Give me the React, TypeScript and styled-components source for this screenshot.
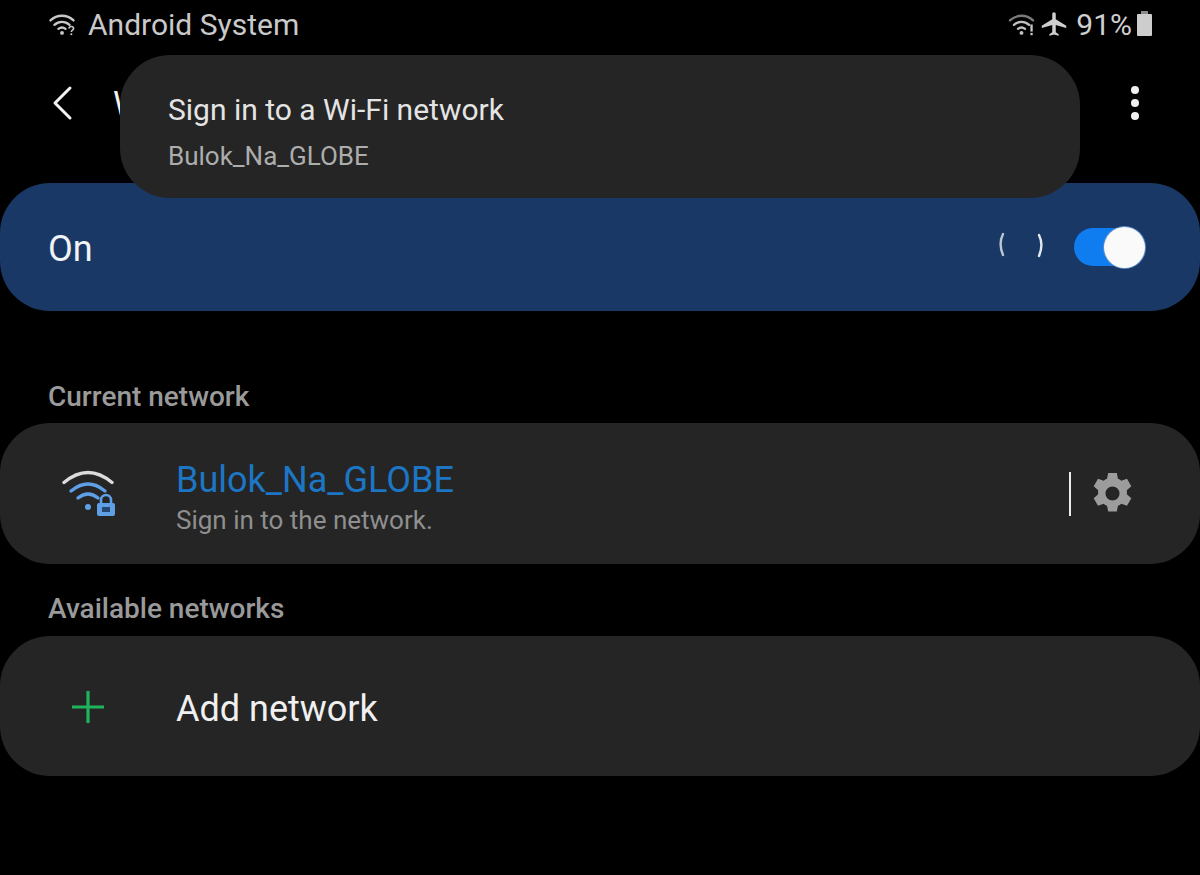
import styled, { createGlobalStyle } from 'styled-components';

const GlobalStyle = createGlobalStyle`
  html, body {
    margin: 0;
    padding: 0;
    background: #000;
  }
  body {
    font-family: Roboto, "Noto Sans", sans-serif;
  }
`;

const WifiArcs: React.FC<{ color: string; outer?: string }> = ({ color, outer }) => (
  <>
    <path d="M2 9.500C9.500 2.500 20.500 2.500 28 9.500" fill="none" stroke={outer ?? color} strokeWidth="2.600" strokeLinecap="round" />
    <path d="M6.500 14.500C11.500 10 18.500 10 23.500 14.500" fill="none" stroke={color} strokeWidth="2.600" strokeLinecap="round" />
    <path d="M11 19C13.500 17 16.500 17 19 19" fill="none" stroke={color} strokeWidth="2.600" strokeLinecap="round" />
    <circle cx="15" cy="23.500" r="2.200" fill={color} />
  </>
);

const App: React.FC = () => (
  <Screen>
    <GlobalStyle />
    <StatusBar>
      <StatusLeft>
        <svg width="28" height="24" viewBox="0 0 30 27">
          <WifiArcs color="#c8c8c8" />
          <path d="M23 18.500C23 15.500 28 15.500 28 18.500C28 20.500 25.500 20.500 25.500 22.500" fill="none" stroke="#c8c8c8" strokeWidth="1.800" />
          <rect x="24.500" y="24" width="2" height="2" fill="#c8c8c8" />
        </svg>
        <StatusLabel>Android System</StatusLabel>
      </StatusLeft>
      <StatusRight>
        <svg width="27" height="24" viewBox="0 0 30 27">
          <WifiArcs color="#c0c0c0" outer="#7a7a7a" />
          <rect x="25" y="14" width="2.600" height="8" fill="#c8c8c8" />
          <rect x="25" y="23.500" width="2.600" height="2.600" fill="#c8c8c8" />
        </svg>
        <PlaneIcon width="28" height="28" viewBox="0 0 24 24">
          <path
            fill="#cfcfcf"
            d="M22.500 15.500v-2l-9-5.500V3.500C13.500 2.670 12.830 2 12 2s-1.500.67-1.500 1.500V8l-9 5.500v2l9-2.700V19l-2.500 1.800V22l4-1 4 1v-1.200L13.500 19v-6.200z"
          />
        </PlaneIcon>
        <BatteryText>91%</BatteryText>
        <Battery />
      </StatusRight>
    </StatusBar>

    <TopBar>
      <svg width="24" height="36" viewBox="0 0 24 36">
        <path d="M20 3L5 18L20 33" fill="none" stroke="#f2f2f2" strokeWidth="3" strokeLinecap="round" strokeLinejoin="round" />
      </svg>
      <PageTitle>Wi-Fi</PageTitle>
      <MoreDots>
        <Dot />
        <Dot />
        <Dot />
      </MoreDots>
    </TopBar>

    <Toast>
      <ToastTitle>Sign in to a Wi-Fi network</ToastTitle>
      <ToastSubtitle>Bulok_Na_GLOBE</ToastSubtitle>
    </Toast>

    <MasterRow>
      <MasterLabel>On</MasterLabel>
      <MasterControls>
        <Spinner viewBox="0 0 46 28" width="46" height="28">
          <path d="M5 3C2 9 2 17 5 24" fill="none" stroke="#b9c6d4" strokeWidth="2.400" strokeLinecap="round" />
          <path d="M41 4C44 10 44 18 41 25" fill="none" stroke="#e4e9ee" strokeWidth="2.400" strokeLinecap="round" />
        </Spinner>
        <Toggle>
          <ToggleKnob />
        </Toggle>
      </MasterControls>
    </MasterRow>

    <SectionLabel $top={70}>Current network</SectionLabel>
    <Card $height={141} $top={10}>
      <IconCell>
        <svg width="56" height="48" viewBox="0 0 56 48">
          <path d="M4 12.500Q28 -7.500 52 12.500" fill="none" stroke="#dcdcdc" strokeWidth="3.400" strokeLinecap="round" />
          <path d="M11 21Q28 7 45 21" fill="none" stroke="#5f9fe6" strokeWidth="3.400" strokeLinecap="round" />
          <path d="M18 28Q28 20 38 28" fill="none" stroke="#5f9fe6" strokeWidth="3.400" strokeLinecap="round" />
          <circle cx="28" cy="37" r="3" fill="#5f9fe6" />
          <path d="M41 33V30A5 5 0 0 1 51 30V33" fill="none" stroke="#5f9fe6" strokeWidth="2.600" />
          <rect x="37" y="33" width="18" height="13" rx="2" fill="#5f9fe6" />
          <rect x="42" y="37" width="8" height="5" fill="#24486f" />
        </svg>
      </IconCell>
      <CardBody>
        <NetworkName>Bulok_Na_GLOBE</NetworkName>
        <NetworkStatus>Sign in to the network.</NetworkStatus>
      </CardBody>
      <Divider />
      <GearButton>
        <svg width="47" height="47" viewBox="0 0 24 24">
          <path
            fill="#9c9c9c"
            fillRule="evenodd"
            d="M9.800 1.500h4.400l.6 3c.6.2 1.200.6 1.700 1l2.900-1 2.200 3.800-2.300 2c.1.700.1 1.400 0 2.100l2.300 2-2.200 3.800-2.900-1c-.5.4-1.100.8-1.700 1l-.6 3H9.800l-.6-3c-.6-.2-1.200-.6-1.700-1l-2.900 1-2.200-3.800 2.300-2c-.1-.7-.1-1.400 0-2.100l-2.300-2 2.200-3.800 2.900 1c.5-.4 1.100-.8 1.700-1zM12 8.400a3.600 3.600 0 1 0 0 7.200 3.600 3.600 0 0 0 0-7.200z"
          />
        </svg>
      </GearButton>
    </Card>

    <SectionLabel $top={29}>Available networks</SectionLabel>
    <Card $height={140} $top={11}>
      <IconCell>
        <svg width="34" height="34" viewBox="0 0 34 34">
          <path d="M17 2V34M1 18H33" fill="none" stroke="#1fb45c" strokeWidth="3.200" />
        </svg>
      </IconCell>
      <CardBody>
        <AddLabel>Add network</AddLabel>
      </CardBody>
    </Card>
  </Screen>
);

const Screen = styled.div`
  position: relative;
  display: flex;
  flex-direction: column;
  width: 1200px;
  height: 875px;
  overflow: hidden;
  background: #000;
`;

const StatusBar = styled.header`
  display: flex;
  align-items: center;
  justify-content: space-between;
  height: 48px;
  padding: 0 48px;
`;

const StatusLeft = styled.div`
  display: flex;
  align-items: center;
  gap: 12px;
`;

const StatusLabel = styled.span`
  font-size: 30px;
  color: #c9c9c9;
`;

const StatusRight = styled.div`
  display: flex;
  align-items: center;
  gap: 5px;
`;

const PlaneIcon = styled.svg`
  margin-right: 3px;
`;

const BatteryText = styled.span`
  font-size: 30px;
  color: #cfcfcf;
`;

const Battery = styled.div`
  position: relative;
  width: 15px;
  height: 22px;
  margin-top: 2px;
  background: #cdcdcd;
  border-radius: 1px;

  &::before {
    content: '';
    position: absolute;
    top: -3px;
    left: 4px;
    width: 7px;
    height: 3px;
    background: #8a8a8a;
  }
`;

const TopBar = styled.div`
  display: flex;
  align-items: center;
  height: 110px;
  padding: 0 50px;
  margin-bottom: 25px;
`;

const PageTitle = styled.h1`
  flex: 1;
  margin: 0 0 0 39px;
  font-size: 34px;
  font-weight: 400;
  color: #f2f2f2;
`;

const MoreDots = styled.div`
  display: flex;
  flex-direction: column;
  gap: 5px;
  margin-right: 11px;
`;

const Dot = styled.span`
  width: 8px;
  height: 8px;
  border-radius: 50%;
  background: #f0f0f0;
`;

const Toast = styled.div`
  position: absolute;
  top: 55px;
  left: 120px;
  z-index: 2;
  display: flex;
  flex-direction: column;
  justify-content: center;
  gap: 16px;
  box-sizing: border-box;
  width: 960px;
  height: 143px;
  padding: 9px 48px 0;
  border-radius: 50px;
  background: #252525;
`;

const ToastTitle = styled.div`
  font-size: 30px;
  line-height: 33px;
  color: #e4e4e4;
`;

const ToastSubtitle = styled.div`
  font-size: 26px;
  line-height: 28px;
  color: #adadad;
`;

const MasterRow = styled.section`
  display: flex;
  flex: none;
  align-items: center;
  justify-content: space-between;
  height: 128px;
  padding: 0 55px 0 48px;
  border-radius: 50px;
  background: #193865;
`;

const MasterLabel = styled.span`
  margin-top: 3px;
  font-size: 36px;
  color: #f0f2f5;
`;

const MasterControls = styled.div`
  display: flex;
  align-items: center;
  gap: 30px;
`;

const Spinner = styled.svg`
  margin-bottom: 4px;
`;

const Toggle = styled.div`
  display: flex;
  align-items: center;
  justify-content: flex-end;
  width: 71px;
  height: 38px;
  border-radius: 19px;
  background: #0f7cf0;
`;

const ToggleKnob = styled.span`
  width: 41px;
  height: 41px;
  border-radius: 50%;
  background: #fafafa;
  box-shadow: 0 0 0 1px #5f8fc8;
`;

const SectionLabel = styled.div<{ $top: number }>`
  margin-top: ${({ $top }) => $top}px;
  padding-left: 48px;
  font-size: 28px;
  font-weight: 500;
  line-height: 32px;
  color: #9a9a9a;
`;

const Card = styled.section<{ $height: number; $top: number }>`
  display: flex;
  flex: none;
  align-items: center;
  height: ${({ $height }) => $height}px;
  margin-top: ${({ $top }) => $top}px;
  border-radius: 50px;
  background: #252525;
`;

const IconCell = styled.div`
  display: flex;
  flex: none;
  align-items: center;
  justify-content: center;
  width: 176px;
`;

const CardBody = styled.div`
  display: flex;
  flex: 1;
  flex-direction: column;
`;

const NetworkName = styled.div`
  margin-top: 7px;
  font-size: 36px;
  line-height: 40px;
  color: #1c76c4;
`;

const NetworkStatus = styled.div`
  margin-top: 5px;
  font-size: 26px;
  line-height: 30px;
  color: #8f8f8f;
`;

const AddLabel = styled.div`
  margin-top: 6px;
  font-size: 36px;
  color: #f0f0f0;
`;

const Divider = styled.span`
  width: 2px;
  height: 44px;
  background: #ececec;
`;

const GearButton = styled.div`
  display: flex;
  align-items: center;
  margin: 0 64px 0 18px;
`;

export default App;
